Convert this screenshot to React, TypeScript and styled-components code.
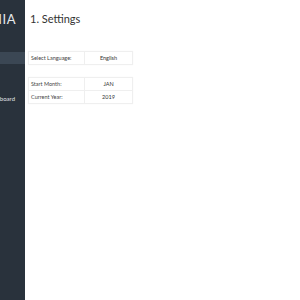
import styled, { createGlobalStyle } from "styled-components";

const GlobalStyle = createGlobalStyle`
  html, body {
    margin: 0;
    padding: 0;
    background: #fff;
    font-family: Lato, "Liberation Sans", sans-serif;
  }
`;

const Page = styled.div`
  display: flex;
  width: 300px;
  height: 300px;
  overflow: hidden;
`;

const Sidebar = styled.div`
  width: 25px;
  flex-shrink: 0;
  background: #29323c;
  display: flex;
  justify-content: flex-end;
  overflow: hidden;
`;

const SidebarInner = styled.div`
  width: 140px;
  flex-shrink: 0;
  display: flex;
  flex-direction: column;
`;

const Logo = styled.div`
  height: 14px;
  margin-top: 12px;
  padding-right: 9px;
  text-align: right;
  color: #e6e9ec;
  font-size: 13px;
  line-height: 14px;
  letter-spacing: 0.5px;
  white-space: nowrap;
`;

const ActiveBand = styled.div`
  height: 12px;
  margin-top: 26px;
  background: #3b4754;
`;

const MenuItem = styled.div`
  height: 12px;
  margin-top: 28px;
  padding-right: 10px;
  text-align: right;
  color: #e0e3e6;
  font-size: 6px;
  line-height: 13px;
  white-space: nowrap;
`;

const Main = styled.div`
  flex: 1;
  padding: 12px 0 0 3px;
`;

const Title = styled.h1`
  margin: 0 0 0 2px;
  font-size: 11px;
  font-weight: 400;
  line-height: 14px;
  color: #333;
`;

const Table = styled.div<{ $top: number }>`
  margin-top: ${(p) => p.$top}px;
  width: 103px;
  border: 1px solid #efefef;
  box-shadow: 0 0 1px rgba(0, 0, 0, 0.05);
`;

const Row = styled.div`
  display: grid;
  grid-template-columns: 56px 1fr;
  height: 12px;
  & + & {
    border-top: 1px solid #efefef;
  }
`;

const Label = styled.div`
  padding-left: 2px;
  font-size: 5.5px;
  line-height: 12px;
  color: #444;
  border-right: 1px solid #efefef;
`;

const Value = styled.div`
  text-align: center;
  font-size: 5.5px;
  line-height: 12px;
  color: #333;
`;

export default function App() {
  return (
    <>
      <GlobalStyle />
      <Page>
        <Sidebar>
          <SidebarInner>
            <Logo>PROMANIA</Logo>
            <ActiveBand />
            <MenuItem>Dashboard</MenuItem>
          </SidebarInner>
        </Sidebar>
        <Main>
          <Title>1. Settings</Title>
          <Table $top={25}>
            <Row>
              <Label>Select Language:</Label>
              <Value>English</Value>
            </Row>
          </Table>
          <Table $top={12}>
            <Row>
              <Label>Start Month:</Label>
              <Value>JAN</Value>
            </Row>
            <Row>
              <Label>Current Year:</Label>
              <Value>2019</Value>
            </Row>
          </Table>
        </Main>
      </Page>
    </>
  );
}
